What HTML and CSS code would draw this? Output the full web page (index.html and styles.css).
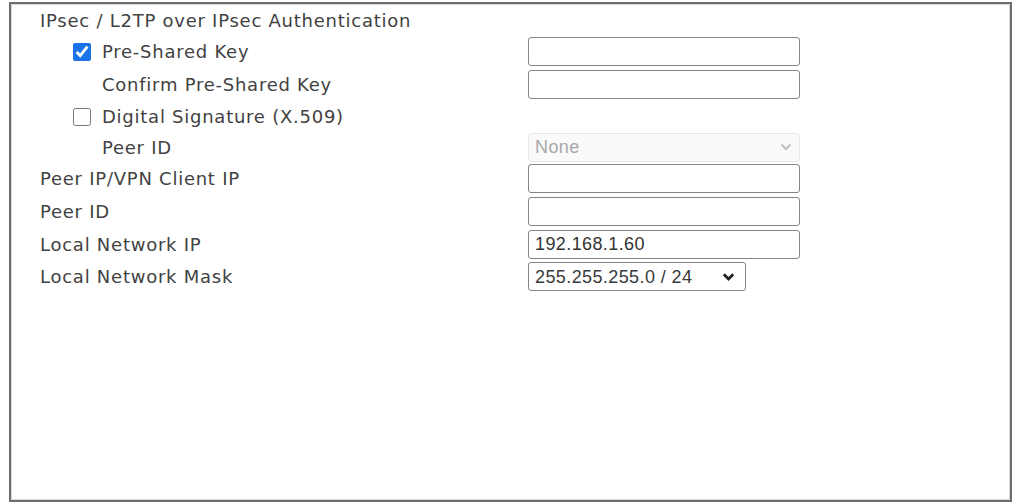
FILE: index.html
```html
<!DOCTYPE html>
<html>
<head>
<meta charset="utf-8">
<link rel="stylesheet" href="styles.css">
</head>
<body>
<div class="panel">
  <div class="form">
    <div class="row r1"><div class="label">IPsec / L2TP over IPsec Authentication</div><div></div></div>
    <div class="row r2">
      <label class="label check"><input type="checkbox" checked class="cb"><span>Pre-Shared Key</span></label>
      <div><input class="field" type="text"></div>
    </div>
    <div class="row r3">
      <div class="label sub">Confirm Pre-Shared Key</div>
      <div><input class="field" type="text"></div>
    </div>
    <div class="row r4">
      <label class="label check"><input type="checkbox" class="cb"><span>Digital Signature (X.509)</span></label>
      <div></div>
    </div>
    <div class="row r5">
      <div class="label sub">Peer ID</div>
      <div class="sel-wrap disabled wide">
        <select class="sel" disabled><option>None</option></select>
        <svg class="chev" width="12" height="8" viewBox="0 0 12 8"><path d="M1.5 1.5 L6 6 L10.5 1.5" fill="none" stroke="currentColor" stroke-width="2"/></svg>
      </div>
    </div>
    <div class="row r6">
      <div class="label">Peer IP/VPN Client IP</div>
      <div><input class="field" type="text"></div>
    </div>
    <div class="row r7">
      <div class="label">Peer ID</div>
      <div><input class="field" type="text"></div>
    </div>
    <div class="row r8">
      <div class="label">Local Network IP</div>
      <div><input class="field" type="text" value="192.168.1.60"></div>
    </div>
    <div class="row r9">
      <div class="label">Local Network Mask</div>
      <div class="sel-wrap mask">
        <select class="sel"><option>255.255.255.0 / 24</option></select>
        <svg class="chev" width="13" height="9" viewBox="0 0 13 9"><path d="M1.8 1.8 L6.5 6.5 L11.2 1.8" fill="none" stroke="currentColor" stroke-width="2.8"/></svg>
      </div>
    </div>
  </div>
</div>
</body>
</html>
```
FILE: styles.css
```css
html, body {
  margin: 0;
  padding: 0;
  background: #ffffff;
}
.panel {
  margin: 2px 0 0 9px;
  width: 1003px;
  height: 500px;
  box-sizing: border-box;
  border: 2px solid #6e6e6e;
  box-shadow: inset 0 0 0 1px #d6d6d6;
  padding: 0 0 0 29px;
}
.form {
  display: grid;
  grid-template-columns: 488px 272px;
}
.row {
  display: contents;
}
.row > * {
  display: flex;
  align-items: center;
}
.r1 > * { height: 32px; }
.r2 > * { height: 31px; }
.r3 > * { height: 34px; }
.r4 > * { height: 31px; }
.r5 > * { height: 30px; }
.r6 > * { height: 32px; }
.r7 > * { height: 34px; }
.r8 > * { height: 33px; }
.r9 > * { height: 31px; }
.label {
  font-family: "DejaVu Sans", Verdana, sans-serif;
  font-size: 18px;
  letter-spacing: 0.75px;
  color: #424242;
  white-space: nowrap;
}
.check {
  padding-left: 33px;
  gap: 11px;
}
.sub {
  padding-left: 62px;
}
.cb {
  margin: 0;
  width: 18px;
  height: 18px;
  accent-color: #1a73e8;
}
.field {
  box-sizing: border-box;
  width: 272px;
  height: 29px;
  margin: 0;
  border: 1.5px solid #858585;
  border-radius: 3px;
  padding: 0 6px;
  font-family: "Liberation Sans", Arial, sans-serif;
  font-size: 18px;
  color: #333;
  background: #fff;
  letter-spacing: 0.4px;
}
.sel-wrap {
  position: relative;
}
.sel {
  appearance: none;
  -webkit-appearance: none;
  box-sizing: border-box;
  margin: 0;
  height: 29px;
  border-radius: 3px;
  padding: 0 6px;
  font-family: "Liberation Sans", Arial, sans-serif;
  font-size: 18px;
  letter-spacing: 0.4px;
  background: #fff;
}
.wide .sel {
  width: 272px;
  border: 1px solid #e8e8e8;
  background: #fafafa;
  color: #a8a8a8;
  opacity: 1;
}
.mask .sel {
  width: 218px;
  border: 1.5px solid #858585;
  color: #3a3a3a;
}
.chev {
  position: absolute;
  top: 50%;
  transform: translateY(-50%);
  pointer-events: none;
}
.wide .chev {
  right: 8px;
  color: #bdbdbd;
}
.mask .chev {
  left: 194px;
  color: #222;
}
```
